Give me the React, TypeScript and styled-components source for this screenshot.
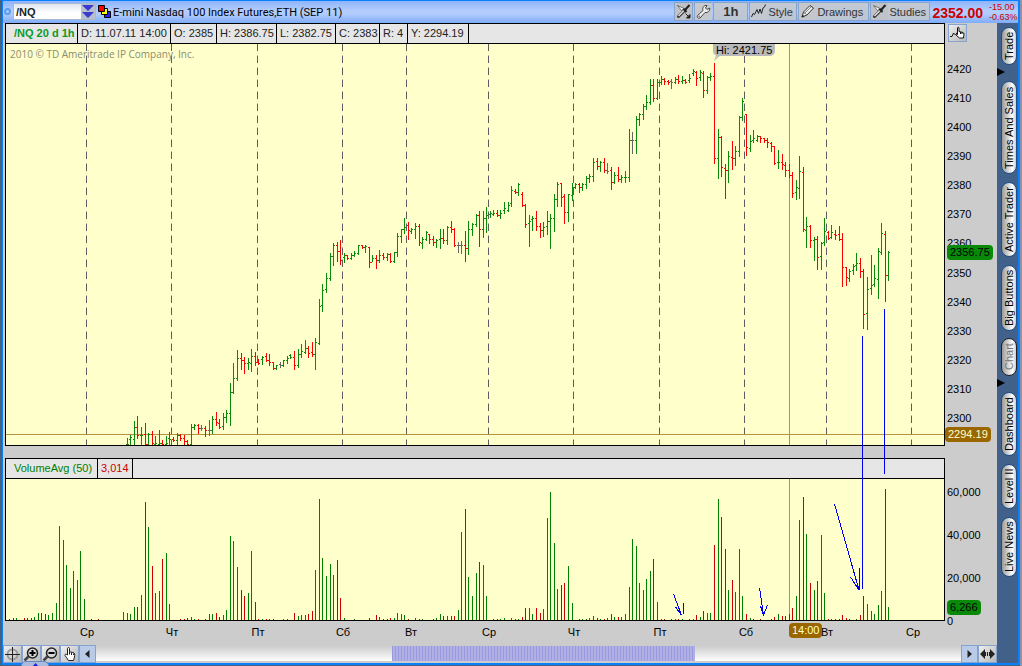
import React from 'react';
import styled, { createGlobalStyle, css } from 'styled-components';

const GlobalStyle = createGlobalStyle`
  * { box-sizing: border-box; }
  html, body { margin: 0; padding: 0; }
  body, button, input {
    font-family: "Liberation Sans", Arial, sans-serif;
    font-size: 11px;
    line-height: 12px;
    color: #000;
  }
  body { background: #46607f; }
`;

/* ---------- data ---------- */

type Tone = 'g' | 'r' | 'n';

// each bar: x, high, low, open, close, tone (chart space)
const PRICE_BARS = `
127 438 445 444 444 g;130 435 445 439 437 g;134 421 445 439 427 g;137 416 438 427 435 r;141 427 445 435 435 g;
145 423 445 434 444 r;148 433 445 444 434 g;152 431 445 434 443 r;155 436 445 444 443 g;159 430 445 444 443 g;
162 440 445 443 444 r;166 436 445 444 443 g;169 432 444 438 439 g;173 437 441 439 440 r;177 433 444 440 435 g;
180 434 440 435 438 r;184 435 444 438 441 r;187 440 445 441 444 r;191 424 445 444 427 g;194 424 429 427 425 g;
198 424 433 425 428 r;201 425 430 428 428 n;205 426 436 428 430 r;209 420 435 430 430 n;212 416 433 430 419 g;
216 412 425 419 422 r;219 419 428 423 427 r;223 413 429 426 417 g;226 410 422 417 413 g;230 383 425 413 392 g;
233 363 393 392 378 g;237 350 380 378 358 g;241 353 369 358 360 r;244 357 373 360 363 r;248 358 369 363 362 g;
251 349 371 363 356 g;255 352 365 356 362 r;258 359 364 362 363 r;262 356 364 359 357 g;266 353 361 356 360 r;
269 354 365 360 362 r;273 362 369 362 368 r;276 365 369 368 365 g;280 362 367 364 365 n;283 360 366 365 360 g;
287 356 363 360 358 g;290 354 358 355 357 g;294 351 369 357 365 r;298 349 367 365 354 g;301 344 357 354 351 g;
305 340 353 352 348 g;308 346 357 348 353 r;312 342 356 352 354 r;315 338 369 354 342 g;319 299 344 343 306 g;
322 284 311 305 290 g;326 273 292 289 278 g;330 253 280 278 256 g;333 243 265 256 245 g;337 242 261 245 251 r;
340 240 264 251 260 r;344 253 262 257 255 g;347 255 259 255 258 r;351 253 259 258 255 g;354 251 256 255 253 g;
358 245 254 253 245 g;362 245 248 245 247 r;365 245 252 247 246 g;369 247 267 247 262 r;372 255 261 262 258 g;
376 255 268 258 260 r;379 250 262 260 255 g;383 253 259 255 257 r;387 253 260 257 254 g;390 253 262 254 261 r;
394 252 262 261 252 g;397 233 256 252 236 g;401 229 242 236 229 g;404 218 233 229 227 g;408 222 239 225 230 r;
411 228 233 231 229 g;415 223 238 229 226 g;419 224 245 226 242 r;422 237 248 243 239 g;426 231 240 239 232 g;
429 234 243 234 239 r;433 236 245 239 242 r;436 239 247 242 240 g;440 229 248 239 238 g;443 229 243 238 240 r;
447 226 244 240 227 g;451 221 232 227 229 r;454 228 246 229 245 r;458 242 252 245 245 n;461 241 253 245 245 n;
465 231 261 245 248 r;468 221 254 248 229 g;472 223 235 229 224 g;476 214 226 224 215 g;479 211 246 215 229 r;
483 211 237 229 218 g;486 207 232 218 215 g;490 211 217 214 213 g;493 210 215 214 213 g;497 210 216 213 215 r;
500 210 218 215 213 g;504 202 213 210 208 g;508 202 211 210 205 g;511 186 206 203 190 g;515 189 193 191 192 r;
518 183 195 192 184 g;522 192 206 194 205 r;525 204 227 205 224 r;529 215 246 223 221 g;532 216 230 219 218 g;
536 211 230 218 226 r;540 223 237 226 230 r;543 222 236 230 227 g;547 211 234 226 221 g;550 214 248 221 218 g;
554 194 231 218 199 g;557 182 206 199 184 g;561 183 206 183 197 r;564 194 223 196 212 r;568 194 221 212 194 g;
572 183 200 195 187 g;575 183 188 187 184 g;579 183 192 184 187 r;582 183 190 187 184 g;586 176 188 184 178 g;
589 174 182 178 176 g;593 158 181 176 162 g;597 158 169 161 166 r;600 161 171 166 162 g;604 158 172 162 170 r;
607 163 173 170 171 n;611 167 189 170 182 r;614 172 183 182 175 g;618 167 181 175 179 r;621 175 182 179 177 g;
625 171 182 177 177 g;629 129 181 177 140 g;632 132 153 140 140 n;636 116 153 140 119 g;639 113 125 119 114 g;
643 104 119 114 106 g;646 95 109 106 102 g;650 79 104 102 85 g;653 79 101 85 98 r;657 79 99 98 82 g;
661 76 84 82 79 g;664 78 84 79 81 r;668 80 84 81 82 r;671 79 88 81 82 n;675 77 83 82 79 g;
678 75 83 79 81 r;682 76 83 81 80 g;685 79 83 80 82 r;689 74 82 80 78 g;693 69 75 73 71 g;
696 71 85 72 78 r;700 70 80 77 72 g;703 71 97 73 90 r;707 76 93 90 77 g;710 73 80 77 76 g;
714 63 163 76 158 r;718 129 178 158 137 g;721 136 176 137 167 r;725 164 198 168 170 r;728 151 182 170 156 g;
732 141 169 157 158 r;735 146 165 158 151 g;739 116 156 151 117 g;742 98 120 117 101 g;746 114 155 114 147 r;
750 135 151 148 141 g;753 130 142 140 138 g;757 135 141 140 136 g;760 136 142 136 138 r;764 138 142 138 140 r;
767 138 147 140 142 r;771 142 151 143 146 r;774 146 164 146 163 r;778 150 168 162 162 g;782 154 169 162 164 r;
785 162 176 165 170 r;789 164 177 170 175 r;792 172 197 175 193 r;796 180 199 192 187 g;799 156 198 188 171 g;
803 167 231 172 229 r;806 217 247 230 226 g;810 225 247 226 240 r;814 237 260 240 239 g;817 236 269 239 257 r;
821 242 269 256 243 g;824 218 245 242 231 g;828 231 239 232 238 r;831 225 238 237 232 g;835 230 239 234 235 r;
839 226 240 234 239 r;842 233 286 239 267 r;846 267 285 267 277 r;849 269 281 278 271 g;853 264 274 270 266 g;
856 253 270 265 263 g;860 258 277 263 271 r;863 269 328 271 314 r;867 277 329 313 289 g;871 255 294 288 285 g;
874 265 286 284 278 g;878 248 298 279 251 g;881 223 254 252 233 g;885 231 301 234 275 r;888 251 280 275 252 g`;

// each bar: x, top, tone
const VOLUME_BARS = `
9 619 g;13 618 r;16 618 g;24 618 r;27 618 r;31 618 r;34 617 g;38 613 g;41 613 r;45 614 r;48 615 g;52 613 g;56 603 g;
59 526 g;63 540 g;66 565 g;70 588 g;73 571 g;77 580 g;80 551 g;84 599 g;91 619 r;98 619 r;123 612 g;127 613 g;130 614 g;
134 607 g;137 607 r;141 595 g;145 502 r;148 527 g;152 566 r;155 593 g;159 591 g;162 559 r;166 553 g;169 604 g;180 619 r;
184 619 r;187 618 r;191 617 g;194 619 g;198 619 r;205 619 r;209 614 g;212 614 g;216 613 r;219 617 r;223 615 g;226 610 g;
230 536 g;233 541 g;237 567 g;241 590 r;244 596 r;248 593 g;251 551 g;255 602 r;258 619 r;262 619 g;266 619 r;269 619 r;
273 619 r;283 619 g;287 619 g;294 613 r;298 616 g;301 615 g;305 615 g;308 614 r;312 611 r;315 570 g;319 499 g;322 558 g;
326 576 g;330 564 g;333 575 g;337 560 r;340 598 r;344 618 g;354 619 g;369 618 r;376 615 r;379 617 g;383 619 r;387 619 g;
390 618 r;394 618 g;397 613 g;401 614 g;404 615 g;408 619 r;415 618 g;419 619 r;422 619 g;433 619 r;436 618 g;440 614 g;
443 616 r;447 616 g;451 616 r;454 616 r;458 610 g;461 532 g;465 509 r;468 577 g;472 596 g;476 573 g;479 562 r;483 565 g;
486 596 g;493 619 g;497 619 r;500 619 g;504 618 g;511 618 g;515 619 r;518 619 g;522 617 r;525 608 r;529 608 g;532 614 g;
536 608 r;540 613 r;543 609 g;547 518 g;550 492 g;554 543 g;557 589 g;561 585 r;564 583 r;568 566 g;572 603 g;579 619 r;
582 619 g;586 619 g;589 618 g;593 616 g;597 618 r;600 619 g;604 619 r;607 618 g;611 614 r;614 617 g;618 617 r;621 617 g;
625 614 g;629 587 g;632 539 g;636 546 g;639 583 g;643 590 g;646 579 g;650 571 g;653 559 r;657 602 g;661 619 g;664 619 r;
671 619 g;675 619 g;678 619 r;682 619 g;689 619 g;693 619 g;696 615 r;700 617 g;703 611 r;707 613 g;710 613 g;714 545 r;
718 499 g;721 517 r;725 549 r;728 590 g;732 580 r;735 592 g;739 549 g;742 596 g;746 614 r;750 618 g;753 619 g;760 619 r;
771 619 r;774 617 r;778 614 g;782 616 r;785 616 r;789 614 r;792 608 r;796 596 g;799 520 g;803 497 r;806 534 g;810 583 r;
814 590 g;817 581 r;821 535 g;824 593 g;828 619 r;831 619 g;835 619 r;839 619 r;842 615 r;846 618 r;849 619 g;856 619 g;
860 615 r;863 596 r;867 604 g;871 611 g;874 614 g;878 605 g;881 591 g;885 489 r;888 607 g`;

const split = (src: string) => src.trim().split(/;\s*/).map(row => row.split(' '));

const pricePath = (tone: Tone) =>
  split(PRICE_BARS)
    .filter(row => row[5] === tone)
    .map(row => {
      const [x, high, low, open, close] = row.map(Number);
      return `M${x} ${high}h1V${low + 1}h-1zM${x - 1} ${open}h1v1h-1zM${x + 1} ${close}h1v1h-1z`;
    })
    .join('');

const volumePath = (tone: Tone) =>
  split(VOLUME_BARS)
    .filter(row => row[2] === tone)
    .map(([x, top]) => `M${x} ${top}h1V620h-1z`)
    .join('');

const DAY_LINES = [86, 171, 257, 342, 406, 488, 573, 659, 744, 826, 911];

const DAYS = [
  { at: 87, name: 'Ср' }, { at: 172, name: 'Чт' }, { at: 258, name: 'Пт' },
  { at: 343, name: 'Сб' }, { at: 411, name: 'Вт' }, { at: 489, name: 'Ср' },
  { at: 574, name: 'Чт' }, { at: 660, name: 'Пт' }, { at: 746, name: 'Сб' },
  { at: 827, name: 'Вт' }, { at: 913, name: 'Ср' },
];

const PRICES = [2420, 2410, 2400, 2390, 2380, 2370, 2360, 2350, 2340, 2330, 2320, 2310, 2300];
const VOLUMES = ['60,000', '40,000', '20,000', '0'];

const QUOTE = [
  { text: 'D: 11.07.11 14:00', width: 93 },
  { text: 'O: 2385', width: 46 },
  { text: 'H: 2386.75', width: 60 },
  { text: 'L: 2382.75', width: 59 },
  { text: 'C: 2383', width: 44 },
  { text: 'R: 4', width: 28 },
  { text: 'Y: 2294.19', width: 61 },
];

const TABS = [
  { name: 'Trade', size: 38, gap: 4 },
  { name: 'Times And Sales', size: 93, gap: 16, marker: true },
  { name: 'Active Trader', size: 75, gap: 8 },
  { name: 'Big Buttons', size: 66, gap: 8 },
  { name: 'Chart', size: 38, gap: 7, current: true },
  { name: 'Dashboard', size: 64, gap: 16, marker: true },
  { name: 'Level II', size: 45, gap: 8 },
  { name: 'Live News', size: 60, gap: 8 },
];

/* ---------- layout ---------- */

const Desktop = styled.div`
  display: flex;
  min-height: 100vh;
  padding: 0 0 1px 2px;
  border-right: 2px solid #8d93ad;
  background: #46607f;
`;

const Frame = styled.main`
  position: relative;
  flex: 1;
  min-width: 0;
  display: flex;
  flex-direction: column;
  border: solid #0a80fa;
  border-width: 1px 2px 2px 1px;
  background: #ccc;
`;

const TopBar = styled.header`
  display: flex;
  align-items: flex-start;
  height: 22px;
  flex: none;
  padding-left: 1px;
  background: linear-gradient(#8db4fb, #b4cefd 45%, #b0cbfd 60%, #80acf8);
  white-space: nowrap;
`;

const Body = styled.div`
  flex: 1;
  display: flex;
  min-height: 0;
`;

const Workspace = styled.section`
  flex: 1;
  min-width: 0;
  display: flex;
  flex-direction: column;
`;

const ChartArea = styled.div`
  flex: 1;
  display: flex;
  min-height: 0;
  padding-left: 2px;
`;

const Charts = styled.div`
  position: relative;
  flex: 1;
  min-width: 0;
  display: flex;
  flex-direction: column;
  gap: 12px;
`;

const Panel = styled.section<{ $share: number }>`
  position: relative;
  flex: ${p => p.$share} 1 0;
  min-height: 0;
  display: flex;
  flex-direction: column;
  border: 1px solid #000;
`;

const PanelHead = styled.div`
  display: flex;
  flex: none;
  height: 20px;
  border-bottom: 1px solid #000;
  background: #e6e6e6;
  white-space: nowrap;
`;

const HeadCell = styled.span<{ $width: number; $tone?: string; $lead?: boolean; $strong?: boolean }>`
  width: ${p => p.$width}px;
  flex: none;
  padding-left: ${p => (p.$lead ? 8 : 3)}px;
  border-right: 1px solid #000;
  line-height: 19px;
  color: ${p => p.$tone ?? '#222'};
  font-weight: ${p => (p.$strong ? 'bold' : 'normal')};
`;

const Plot = styled.svg`
  display: block;
  flex: 1;
  width: 100%;
  min-height: 0;
  background: #ffffcc;
`;

const Overlay = styled.svg`
  position: absolute;
  inset: 0;
  width: 100%;
  height: 100%;
  pointer-events: none;
`;

const Watermark = styled.span`
  position: absolute;
  left: 4px;
  top: 24px;
  font-family: "Open Sans", Verdana, sans-serif;
  font-size: 10px;
  color: #8c8c70;
`;

const HighTag = styled.span`
  position: absolute;
  left: 75.4%;
  top: 20px;
  width: 62px;
  height: 12px;
  border-radius: 0 0 5px 5px;
  background: #b9b9b9;
  text-align: center;
`;

/* ---------- axes ---------- */

const Axes = styled.aside`
  width: 52px;
  flex: none;
  display: flex;
  flex-direction: column;
  gap: 12px;
`;

const Axis = styled.div<{ $share: number }>`
  position: relative;
  flex: ${p => p.$share} 1 0;
  min-height: 0;
  display: flex;
  flex-direction: column;
`;

const Scale = styled.ol<{ $volume?: boolean }>`
  flex: 1;
  display: flex;
  flex-direction: column;
  justify-content: space-between;
  list-style: none;
  padding: 0 0 0 2px;
  margin: ${p => (p.$volume ? '28px 0 -6px' : '21px 0 22px')};
`;

const Tag = styled.span<{ $kind: 'live' | 'cursor' }>`
  position: absolute;
  height: 15px;
  padding: 0 3px;
  border-radius: 4px;
  line-height: 15px;
  ${p => (p.$kind === 'live'
    ? css`left: 2px; background: #088a08; color: #000;`
    : css`left: 0; background: #996600; color: #ffffcc;`)}
`;

const TimeAxis = styled.div`
  position: relative;
  flex: none;
  height: 24px;
  margin: 0 52px 0 2px;
`;

const DayLabel = styled.span`
  position: absolute;
  top: 5px;
  transform: translateX(-50%);
`;

const TimeTag = styled(Tag)`
  top: 2px;
  left: 83.4%;
`;

/* ---------- controls ---------- */

const SymbolBox = styled.div`
  display: flex;
  width: 83px;
  height: 17px;
  margin: 2px 2px 0 2px;
  border: 1px solid #a9b8d0;
  background: linear-gradient(#dfe6ee, #fff 60%);
`;

const SymbolInput = styled.input`
  flex: 1;
  width: 0;
  min-width: 0;
  padding: 0 2px;
  border: 0;
  outline: 0;
  background: none;
  font-weight: bold;
  color: #222;
`;

const SymbolArrow = styled.button`
  width: 14px;
  padding: 0;
  border: 0;
  background: #b8bfcc;
  svg { display: block; }
`;

const Dot = styled.span`
  width: 7px;
  height: 7px;
  margin-top: 7px;
  border: 2px solid #5a9cf0;
  border-radius: 50%;
`;

const Layers = styled.svg`
  display: block;
  margin: 4px 2px 0 0;
`;

const Title = styled.h1`
  flex: 1;
  min-width: 0;
  margin: 5px 0 0;
  overflow: hidden;
  font-family: Roboto, Tahoma, sans-serif;
  font-size: 11px;
  line-height: 14px;
  font-weight: normal;
`;

const Tools = styled.nav`
  display: flex;
  gap: 1px;
  margin-top: 1px;
`;

const ToolButton = styled.button<{ $width: number; $strong?: boolean }>`
  display: flex;
  align-items: center;
  justify-content: ${p => (p.$strong ? 'center' : 'flex-start')};
  gap: 1px;
  width: ${p => p.$width}px;
  height: 19px;
  padding: 0;
  border: 1px solid #86a3cd;
  background: linear-gradient(#c3cad4, #bcc5d2);
  color: #333;
  font-size: ${p => (p.$strong ? 13 : 11)}px;
  font-weight: ${p => (p.$strong ? 'bold' : 'normal')};
  svg { display: block; flex: none; }
`;

const IconButton = styled.button<{ $plain?: boolean }>`
  display: flex;
  align-items: center;
  justify-content: center;
  width: ${p => (p.$plain ? 17 : 19)}px;
  height: 18px;
  flex: none;
  padding: 0;
  border: 1px solid #86a3cd;
  background: ${p => (p.$plain ? '#b9cbe6' : 'linear-gradient(135deg, #eee, #b8b8b8)')};
  svg { display: block; flex: none; }
`;

const AxisButton = styled(IconButton)`
  margin: 1px 0 0 3px;
`;

const LastPrice = styled.strong`
  margin: 4px 6px 0 2px;
  color: #cc0000;
  font-size: 14px;
  line-height: 16px;
`;

const Change = styled.div`
  width: 29px;
  padding-top: 1px;
  color: #cc0000;
  font-size: 9px;
  line-height: 10px;
`;

const BottomBar = styled.footer`
  display: flex;
  flex: none;
  height: 18px;
`;

const Track = styled.div`
  flex: 1;
  display: flex;
  height: 15px;
  margin-top: 1px;
  background: linear-gradient(#ccc, #fff);
`;

const Thumb = styled.div`
  width: 35%;
  margin-left: 34.2%;
  background: repeating-linear-gradient(90deg, #9a9ae0 0 1px, #b0b0e4 1px 3px);
`;

const Grip = styled.span`
  position: absolute;
  left: 18px;
  bottom: -3px;
  width: 28px;
  height: 5px;
  border: 1px solid #6b87b8;
  border-bottom: 0;
  border-radius: 5px 5px 0 0;
  background: #a9bce0;
  svg { display: block; margin: 1px auto 0; }
`;

const Rail = styled.nav`
  width: 21px;
  flex: none;
  display: flex;
  flex-direction: column;
  padding-left: 4px;
  background: #41608a;
`;

const RailTab = styled.button<{ $size: number; $gap: number; $current?: boolean; $marker?: boolean }>`
  position: relative;
  width: 16px;
  height: ${p => p.$size}px;
  margin-top: ${p => p.$gap}px;
  padding: 0;
  border: 1px solid ${p => (p.$current ? '#222' : '#1c4f88')};
  border-radius: 8px;
  background: linear-gradient(90deg, #9a9a9a, #fff 75%, #ccc);
  color: ${p => (p.$current ? '#777' : '#000')};
  span {
    display: block;
    writing-mode: vertical-rl;
    transform: rotate(180deg);
    width: 14px;
    height: 100%;
    line-height: 14px;
    white-space: nowrap;
  }
  ${p => p.$marker && css`
    &::before {
      content: '';
      position: absolute;
      left: -5px;
      top: -14px;
      border: solid transparent;
      border-width: 4px 0 4px 8px;
      border-left-color: #000;
    }
  `}
`;

/* ---------- icons ---------- */

const BrushIcon = ({ arrow }: { arrow?: boolean }) => (
  <svg width="17" height="17" viewBox="0 0 17 17" fill="none">
    <path d="M0 0h17v17H0z" fill="#bfc3c8" />
    <path d="M3.500 13.500L10 7" stroke="#333" strokeWidth="3" strokeLinecap="round" />
    <path d="M3.500 13L9 7.500" stroke="#eee" strokeWidth="1.300" />
    <path d="M8 5.500l3.500 3.500M10 7l4.500-5" stroke="#222" strokeWidth="2" />
    <path d="M2.500 2.500l4 5 2.500-2z" fill="#fff" stroke="#444" strokeWidth=".7" />
    {arrow && <path d="M10.500 10.500l3 3M15 11.500V15h-3.500z" stroke="#222" fill="#222" />}
  </svg>
);

const WrenchIcon = () => (
  <svg width="17" height="17" viewBox="0 0 17 17" fill="none">
    <path d="M0 0h17v17H0z" fill="#c6c9cd" />
    <path d="M2.500 12.500l5.500-5C7 4.500 9 2 12 2.500L10.500 5l1.500 1.500L14.700 5c.6 3-2 5-4.700 4.500l-5 5.500c-2 1-3.500-1-2.500-2.500z" fill="#eee" stroke="#444" />
    <circle cx="4.200" cy="13.200" r=".7" fill="#444" />
  </svg>
);

const StyleIcon = () => (
  <svg width="17" height="17" viewBox="0 0 17 17" fill="none" stroke="#222">
    <path d="M0 0h17v17H0z" fill="#c4c9d1" stroke="none" />
    <path d="M1.500 14L3 10.500l1.500 1L7 6.500l1.500 4L10 6l1.500 4.500L13 5l1.500-1 1-2.500" />
  </svg>
);

const PencilIcon = () => (
  <svg width="17" height="17" viewBox="0 0 17 17" fill="none" stroke="#333">
    <path d="M0 0h17v17H0z" fill="#c4c7cb" stroke="none" />
    <path d="M3 14l1.500-5L11 2.500 14.500 5 8 12z" fill="#eee" />
    <path d="M3 14l2-.5-1.400-1.400z" fill="#222" />
    <path d="M5.500 10.500L12 4M4.500 9L8 12" stroke="#888" />
  </svg>
);

const ChartHandIcon = () => (
  <svg width="17" height="16" viewBox="0 0 17 16" fill="none" stroke="#111">
    <path d="M1 11.500h2L4.500 8l2 2L9 6.500" />
    <path d="M8.500 9.500V3c0-1 1.500-1 1.500 0v3.500l4 1c1.200.4 1 2 .5 5.500h-4L7 10c-.4-1 .7-1.300 1.500-.5z" fill="#fff" />
    <path d="M11.500 7v2M13 7.500V9" />
  </svg>
);

const CrosshairIcon = () => (
  <svg width="17" height="16" viewBox="0 0 17 16" fill="none">
    <circle cx="8.500" cy="8.500" r="5" stroke="#9a9a9a" strokeWidth="2" />
    <path d="M8.500 1v15M1 8.500h15" stroke="#222" />
  </svg>
);

const LensIcon = ({ plus }: { plus?: boolean }) => (
  <svg width="17" height="16" viewBox="0 0 17 16" fill="none" stroke="#222">
    <circle cx="9.500" cy="7" r="5" fill="#d8d8d8" strokeWidth="1.500" />
    <path d="M5.500 10.500L1.500 14.500" stroke="#444" strokeWidth="2.500" />
    <path d={plus ? 'M6.500 7h6M9.500 4v6' : 'M6.500 7h6'} stroke="#000" strokeWidth="2" />
  </svg>
);

const HandIcon = () => (
  <svg width="17" height="16" viewBox="0 0 17 16" fill="none" stroke="#222">
    <path d="M6.500 9V2.500c0-1.300 2-1.300 2 0V6c2 0 3 .3 4.500 1 1.300.6.700 4-.5 7.500h-5C6.500 12.500 5 11 4 9.500c-.5-1.300 1-1.700 2.500-.5z" fill="#fff" />
    <path d="M8.500 6v2.500M10.500 6.500V9M12.500 7.500V9" />
  </svg>
);

const ArrowIcon = ({ left }: { left?: boolean }) => (
  <svg width="5" height="9" viewBox="0 0 5 9">
    <path d={left ? 'M4.500 0v8L0 4z' : 'M.5 0v8L5 4z'} fill="#222" />
  </svg>
);

const ExpandIcon = () => (
  <svg width="15" height="10" viewBox="0 0 15 10" fill="#222">
    <path d="M5 0v10L0 5zM10 0v10l5-5z" />
    <path d="M5 3h5v4H5z" fill="#ccc" />
    <path d="M5 3h1v4H5zM7 3h1v4H7zM9 3h1v4H9z" />
  </svg>
);

/* ---------- page ---------- */

const PricePlot = () => (
  <Plot viewBox="6 44 938 401" preserveAspectRatio="none" shapeRendering="crispEdges" role="img" aria-label="Price chart">
    {DAY_LINES.map(x => (
      <g key={x} fill="none">
        <path d={`M${x + 0.5} 43V445`} stroke="#b4b4a4" strokeDasharray="8 4" />
        <path d={`M${x + 0.5} 44V445`} stroke="#5c5c5c" strokeDasharray="7 5" />
      </g>
    ))}
    <path d="M6 434h938v1H6z" fill="#b8933f" />
    <path d="M789 44h1v401h-1z" fill="#b8933f" />
    <path d={pricePath('n')} fill="#666" />
    <path d={pricePath('g')} fill="#0a8a0a" />
    <path d={pricePath('r')} fill="#ff0000" />
    <path d="M714 61l2-6h5z" fill="#c4c4b8" shapeRendering="auto" />
  </Plot>
);

const VolumePlot = () => (
  <Plot viewBox="6 479 938 141" preserveAspectRatio="none" shapeRendering="crispEdges" role="img" aria-label="Volume chart">
    <path d="M789 479h1v141h-1z" fill="#b8933f" />
    <path d={volumePath('g')} fill="#008000" />
    <path d={volumePath('r')} fill="#cc0000" />
  </Plot>
);

const Drawings = () => (
  <Overlay viewBox="5 23 940 598" preserveAspectRatio="none" fill="none" stroke="#0000f0" shapeRendering="crispEdges" aria-hidden="true">
    <path d="M862.500 336V589M884.500 309V474" />
    <path d="M834.500 504L859 590M850.500 577L859 590M859.500 568V590" />
    <path d="M673.500 594L681.500 615M675.500 607L681.500 615M683.500 603V614" />
    <path d="M759.500 588L763.500 615M760.500 606L763.500 615L767.500 605" />
  </Overlay>
);

export default function App() {
  return (
    <Desktop>
      <GlobalStyle />
      <Frame>
        <TopBar>
          <Dot />
          <SymbolBox>
            <SymbolInput aria-label="Symbol" defaultValue="/NQ" />
            <SymbolArrow aria-label="Choose symbol">
              <svg width="14" height="15" viewBox="0 0 14 15" fill="#3a3ad0">
                <path d="M1 1h12L7 7zM1 8h12l-6 6z" />
              </svg>
            </SymbolArrow>
          </SymbolBox>
          <Layers width="13" height="13" viewBox="0 0 13 13" stroke="#000">
            <path d="M6.500 6.500h6v6h-6z" fill="#2222ff" />
            <path d="M3.500 3.500h6v6h-6z" fill="#ffff00" />
            <path d="M.5.5h6v6h-6z" fill="#ff0000" />
          </Layers>
          <Title>E-mini Nasdaq 100 Index Futures,ETH (SEP 11)</Title>
          <Tools>
            <ToolButton $width={19} aria-label="Drawing tool"><BrushIcon arrow /></ToolButton>
            <ToolButton $width={18} aria-label="Settings"><WrenchIcon /></ToolButton>
            <ToolButton $width={35} $strong>1h</ToolButton>
            <ToolButton $width={48}><StyleIcon />Style</ToolButton>
            <ToolButton $width={71}><PencilIcon />Drawings</ToolButton>
            <ToolButton $width={60}><BrushIcon />Studies</ToolButton>
          </Tools>
          <LastPrice>2352.00</LastPrice>
          <Change>
            <div>-15.00</div>
            <div>-0.63%</div>
          </Change>
        </TopBar>

        <Body>
          <Workspace>
            <ChartArea>
              <Charts>
                <Panel $share={421}>
                  <PanelHead>
                    <HeadCell $width={72} $tone="#0a9a28" $lead $strong>/NQ 20 d 1h</HeadCell>
                    {QUOTE.map(q => <HeadCell key={q.text} $width={q.width}>{q.text}</HeadCell>)}
                  </PanelHead>
                  <PricePlot />
                  <Watermark>2010 © TD Ameritrade IP Company, Inc.</Watermark>
                  <HighTag>Hi: 2421.75</HighTag>
                </Panel>
                <Panel $share={161}>
                  <PanelHead>
                    <HeadCell $width={92} $tone="#008000" $lead>VolumeAvg (50)</HeadCell>
                    <HeadCell $width={35} $tone="#cc0000">3,014</HeadCell>
                  </PanelHead>
                  <VolumePlot />
                </Panel>
                <Drawings />
              </Charts>
              <Axes>
                <Axis $share={423}>
                  <AxisButton aria-label="Pan chart"><ChartHandIcon /></AxisButton>
                  <Scale>{PRICES.map(p => <li key={p}>{p}</li>)}</Scale>
                  <Tag $kind="live" style={{ top: `${(222 / 423) * 100}%` }}>2356.75</Tag>
                  <Tag $kind="cursor" style={{ top: `${(404 / 423) * 100}%` }}>2294.19</Tag>
                </Axis>
                <Axis $share={163}>
                  <Scale $volume>{VOLUMES.map(v => <li key={v}>{v}</li>)}</Scale>
                  <Tag $kind="live" style={{ top: `${(142 / 163) * 100}%` }}>6,266</Tag>
                </Axis>
              </Axes>
            </ChartArea>
            <TimeAxis>
              {DAYS.map(d => (
                <DayLabel key={d.at} style={{ left: `${((d.at - 5) / 940) * 100}%` }}>{d.name}</DayLabel>
              ))}
              <TimeTag $kind="cursor">14:00</TimeTag>
            </TimeAxis>
            <BottomBar>
              <IconButton aria-label="Crosshair"><CrosshairIcon /></IconButton>
              <IconButton aria-label="Zoom in"><LensIcon plus /></IconButton>
              <IconButton aria-label="Zoom out"><LensIcon /></IconButton>
              <IconButton aria-label="Pan"><HandIcon /></IconButton>
              <IconButton $plain aria-label="Scroll left"><ArrowIcon left /></IconButton>
              <Track><Thumb /></Track>
              <IconButton $plain aria-label="Scroll right"><ArrowIcon /></IconButton>
              <IconButton aria-label="Fit width"><ExpandIcon /></IconButton>
            </BottomBar>
          </Workspace>
          <Rail aria-label="Panels">
            {TABS.map(t => (
              <RailTab key={t.name} $size={t.size} $gap={t.gap} $current={t.current} $marker={t.marker}>
                <span>{t.name}</span>
              </RailTab>
            ))}
          </Rail>
        </Body>
        <Grip><svg width="7" height="4" viewBox="0 0 7 4"><path d="M0 4l3.500-4L7 4z" fill="#2222dd" /></svg></Grip>
      </Frame>
    </Desktop>
  );
}
